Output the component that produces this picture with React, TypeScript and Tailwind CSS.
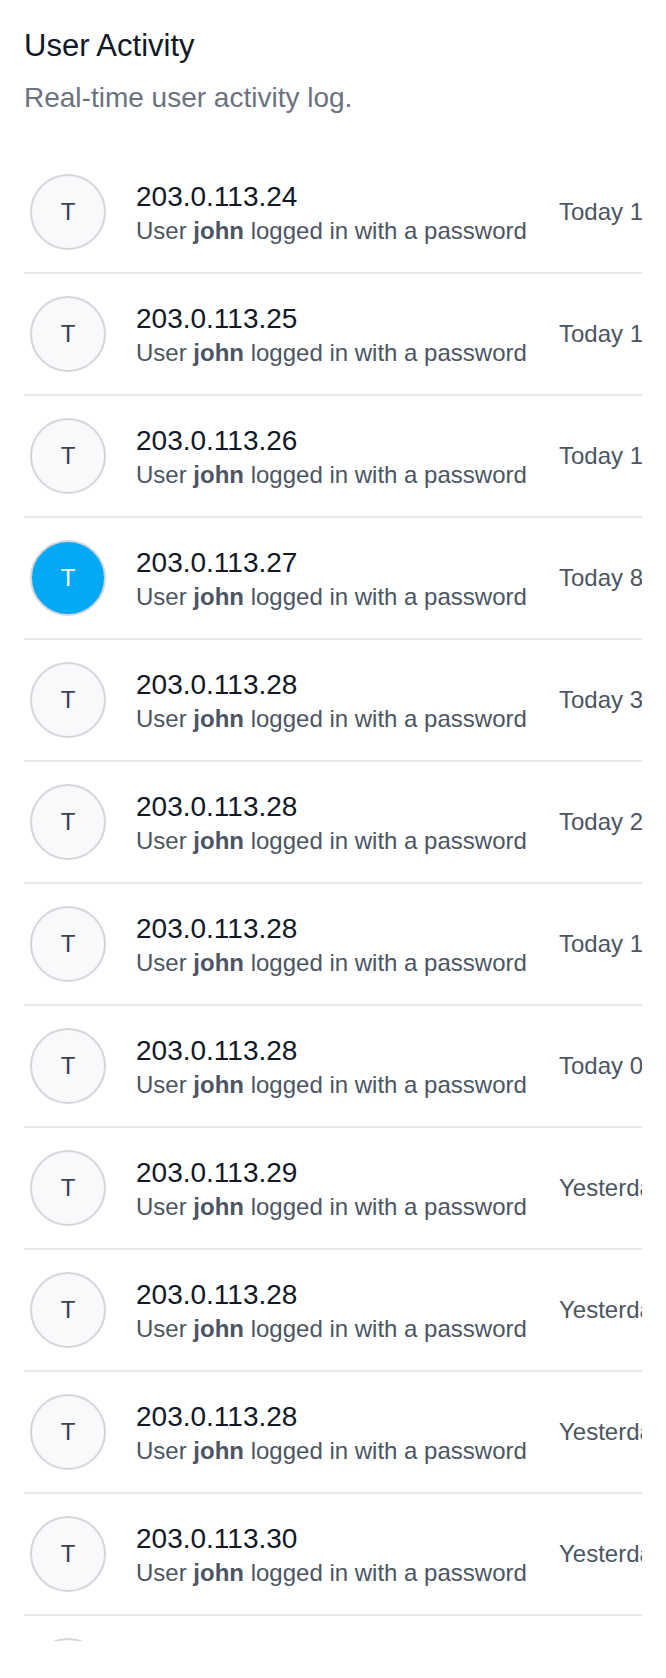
import React from "react";

type Item = { ip: string; time: string; active?: boolean };

const items: Item[] = [
  { ip: "203.0.113.24", time: "Today 11:42 AM" },
  { ip: "203.0.113.25", time: "Today 10:15 AM" },
  { ip: "203.0.113.26", time: "Today 10:02 AM" },
  { ip: "203.0.113.27", time: "Today 8:31 AM", active: true },
  { ip: "203.0.113.28", time: "Today 3:20 AM" },
  { ip: "203.0.113.28", time: "Today 2:48 AM" },
  { ip: "203.0.113.28", time: "Today 1:05 AM" },
  { ip: "203.0.113.28", time: "Today 00:12 AM" },
  { ip: "203.0.113.29", time: "Yesterday 11:50 PM" },
  { ip: "203.0.113.28", time: "Yesterday 9:14 PM" },
  { ip: "203.0.113.28", time: "Yesterday 6:33 PM" },
  { ip: "203.0.113.30", time: "Yesterday 4:02 PM" },
  { ip: "203.0.113.31", time: "Yesterday 2:19 PM" },
];

function Row({ item }: { item: Item }) {
  return (
    <div className="flex h-[122px] shrink-0 items-center border-b-2 border-[#e5e7eb] pl-[6px]">
      <div
        className={
          item.active
            ? "flex h-[76px] w-[76px] shrink-0 items-center justify-center rounded-full border-2 border-[#d4d6db] bg-[#03a9f4] text-[24px] text-white"
            : "flex h-[76px] w-[76px] shrink-0 items-center justify-center rounded-full border-2 border-[#d4d6db] bg-[#f8f9fb] text-[24px] text-[#374151]"
        }
      >
        T
      </div>
      <div className="ml-[30px] mt-[2px] flex w-[423px] shrink-0 flex-col whitespace-nowrap">
        <div className="text-[28px] leading-[36px] text-[#111827]">{item.ip}</div>
        <div className="text-[24px] leading-[32px] text-[#4b5563]">
          User <span className="font-bold">john</span> logged in with a password
        </div>
      </div>
      <div className="shrink-0 whitespace-nowrap text-[24px] leading-[32px] text-[#4b5563]">
        {item.time}
      </div>
    </div>
  );
}

export default function App() {
  return (
    <div
      className="min-h-[1678px] w-[666px] bg-white px-[24px]"
      style={{ fontFamily: '"Liberation Sans", Arial, sans-serif' }}
    >
      <div className="pt-[28px]">
        <h1 className="text-[31px] leading-[36px] text-[#111827]">User Activity</h1>
        <p className="mt-[16px] text-[28px] leading-[36px] text-[#6b7280]">
          Real-time user activity log.
        </p>
      </div>
      <div className="mt-[36px] flex h-[1489px] flex-col overflow-hidden">
        {items.map((it, i) => (
          <Row key={i} item={it} />
        ))}
      </div>
    </div>
  );
}
